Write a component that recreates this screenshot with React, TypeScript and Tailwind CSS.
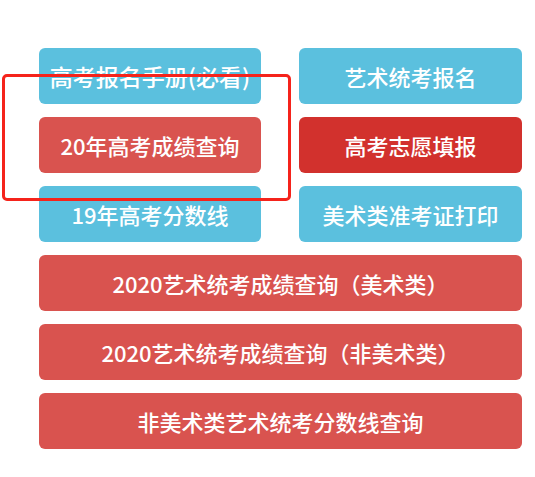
const blue = 'bg-[#5bc0de]';
const red = 'bg-[#d9534f]';
const darkRed = 'bg-[#d2312d]';

function Btn({ label, color, big }: { label: string; color: string; big?: boolean }) {
  return (
    <a
      href="#"
      className={`${color} ${big ? 'text-[23px]' : 'text-[22px]'} flex h-[56px] items-center justify-center rounded-[6px] font-medium leading-none text-white whitespace-nowrap`}
    >
      {label}
    </a>
  );
}

export default function App() {
  return (
    <div
      className="relative min-h-[477px] w-[535px] bg-white"
      style={{ fontFamily: '"Noto Sans CJK SC", "Noto Sans", sans-serif' }}
    >
      <div className="ml-[39px] w-[483px] pt-[48px] flex flex-col gap-[13px]">
        <div className="grid grid-cols-[222px_223px] gap-x-[38px] gap-y-[13px]">
          <Btn label="高考报名手册(必看)" color={blue} big />
          <Btn label="艺术统考报名" color={blue} />
          <Btn label="20年高考成绩查询" color={red} />
          <Btn label="高考志愿填报" color={darkRed} />
          <Btn label="19年高考分数线" color={blue} />
          <Btn label="美术类准考证打印" color={blue} />
        </div>
        <Btn label="2020艺术统考成绩查询（美术类）" color={red} />
        <Btn label="2020艺术统考成绩查询（非美术类）" color={red} />
        <Btn label="非美术类艺术统考分数线查询" color={red} />
      </div>
      {/* highlight frame drawn over the page */}
      <div className="pointer-events-none absolute left-[2px] top-[74px] h-[127px] w-[289px] rounded-[5px] border-[3px] border-[#f5231b]" />
    </div>
  );
}
